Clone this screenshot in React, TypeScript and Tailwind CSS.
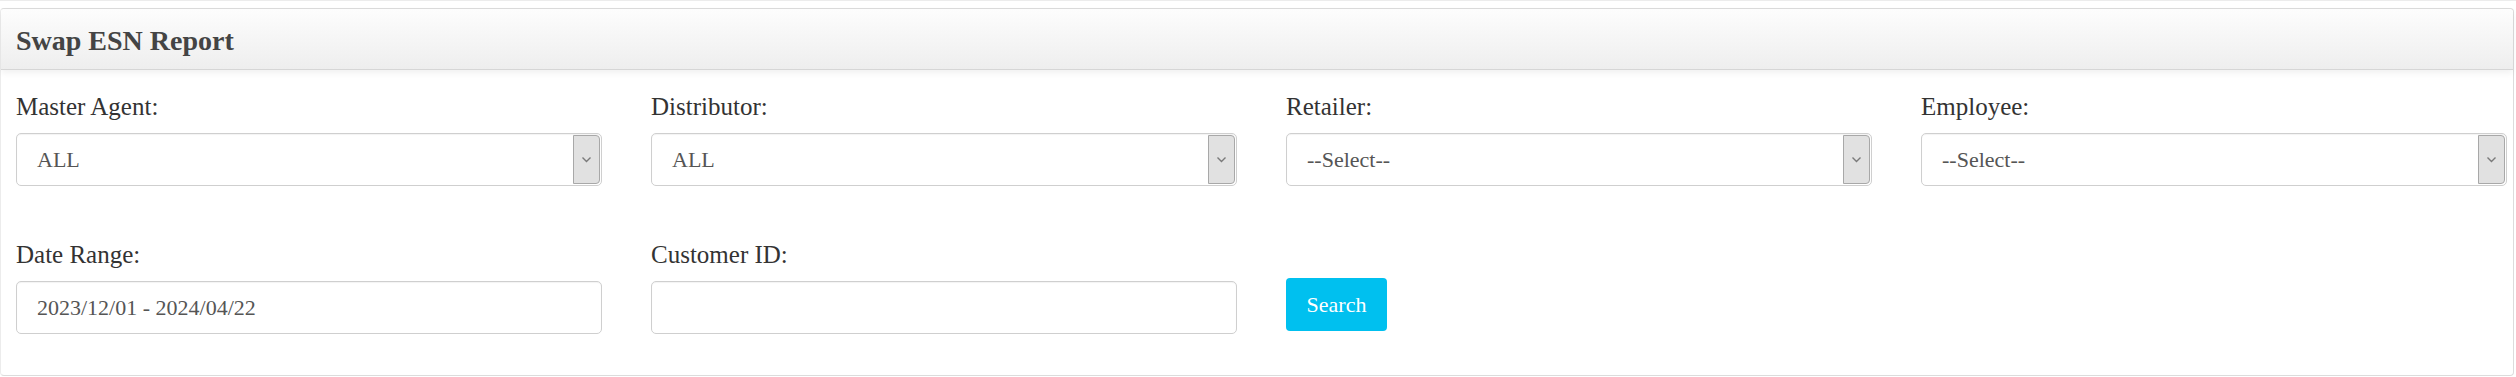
import React from 'react'

type FieldProps = {
  label: string
  children: React.ReactNode
}

const Field = ({ label, children }: FieldProps) => (
  <div className="flex flex-col">
    <label className="h-[30px] mb-[11px] text-[25px] leading-[30px] text-[#333]">{label}</label>
    {children}
  </div>
)

const SelectBox = ({ value }: { value: string }) => (
  <div className="flex h-[53px] items-stretch rounded-[5px] border border-[#cfcfcf] bg-white shadow-[inset_0_1px_1px_rgba(0,0,0,0.05)]">
    <span className="flex flex-1 items-center pl-[20px] text-[22px] text-[#555]">{value}</span>
    <span className="m-[1px] flex w-[27px] items-center justify-center rounded-r-[4px] border border-[#a8a8a8] bg-[#e1e1e1]">
      <svg width="11" height="7" viewBox="0 0 11 7" fill="none">
        <path d="M1.5 1.5l4 4 4-4" stroke="#7a7a7a" strokeWidth="1.4" />
      </svg>
    </span>
  </div>
)

const TextBox = ({ value }: { value?: string }) => (
  <div className="flex h-[53px] items-center rounded-[5px] border border-[#cfcfcf] bg-white pl-[20px] text-[22px] text-[#555] shadow-[inset_0_1px_1px_rgba(0,0,0,0.05)]">
    {value}
  </div>
)

export default function App() {
  return (
    <div className="h-[377px] w-[2516px] overflow-hidden bg-white font-['Liberation_Serif',serif]">
      <div className="h-px bg-[#ececec]" />
      <div className="mr-[2px] mt-[7px] h-[368px] rounded-[4px] border border-[#dcdcdc] border-l-[#ececec]">
        <div className="flex h-[61px] items-center rounded-t-[4px] border-b border-[#d6d6d6] bg-gradient-to-b from-[#fdfdfd] to-[#eeeeee] pl-[15px] pt-[4px] shadow-[0_3px_6px_rgba(0,0,0,0.06)]">
          <h3 className="text-[28px] font-bold text-[#444]">Swap ESN Report</h3>
        </div>
        <div className="grid grid-cols-4 gap-x-[49px] gap-y-[54px] pl-[15px] pr-[6px] pt-[22px]">
          <Field label="Master Agent:">
            <SelectBox value="ALL" />
          </Field>
          <Field label="Distributor:">
            <SelectBox value="ALL" />
          </Field>
          <Field label="Retailer:">
            <SelectBox value="--Select--" />
          </Field>
          <Field label="Employee:">
            <SelectBox value="--Select--" />
          </Field>
          <Field label="Date Range:">
            <TextBox value="2023/12/01 - 2024/04/22" />
          </Field>
          <Field label="Customer ID:">
            <TextBox />
          </Field>
          <div className="pt-[38px]">
            <button className="h-[53px] w-[101px] rounded-[4px] bg-[#00c0ef] text-[22px] text-white">Search</button>
          </div>
          <div />
        </div>
      </div>
    </div>
  )
}
